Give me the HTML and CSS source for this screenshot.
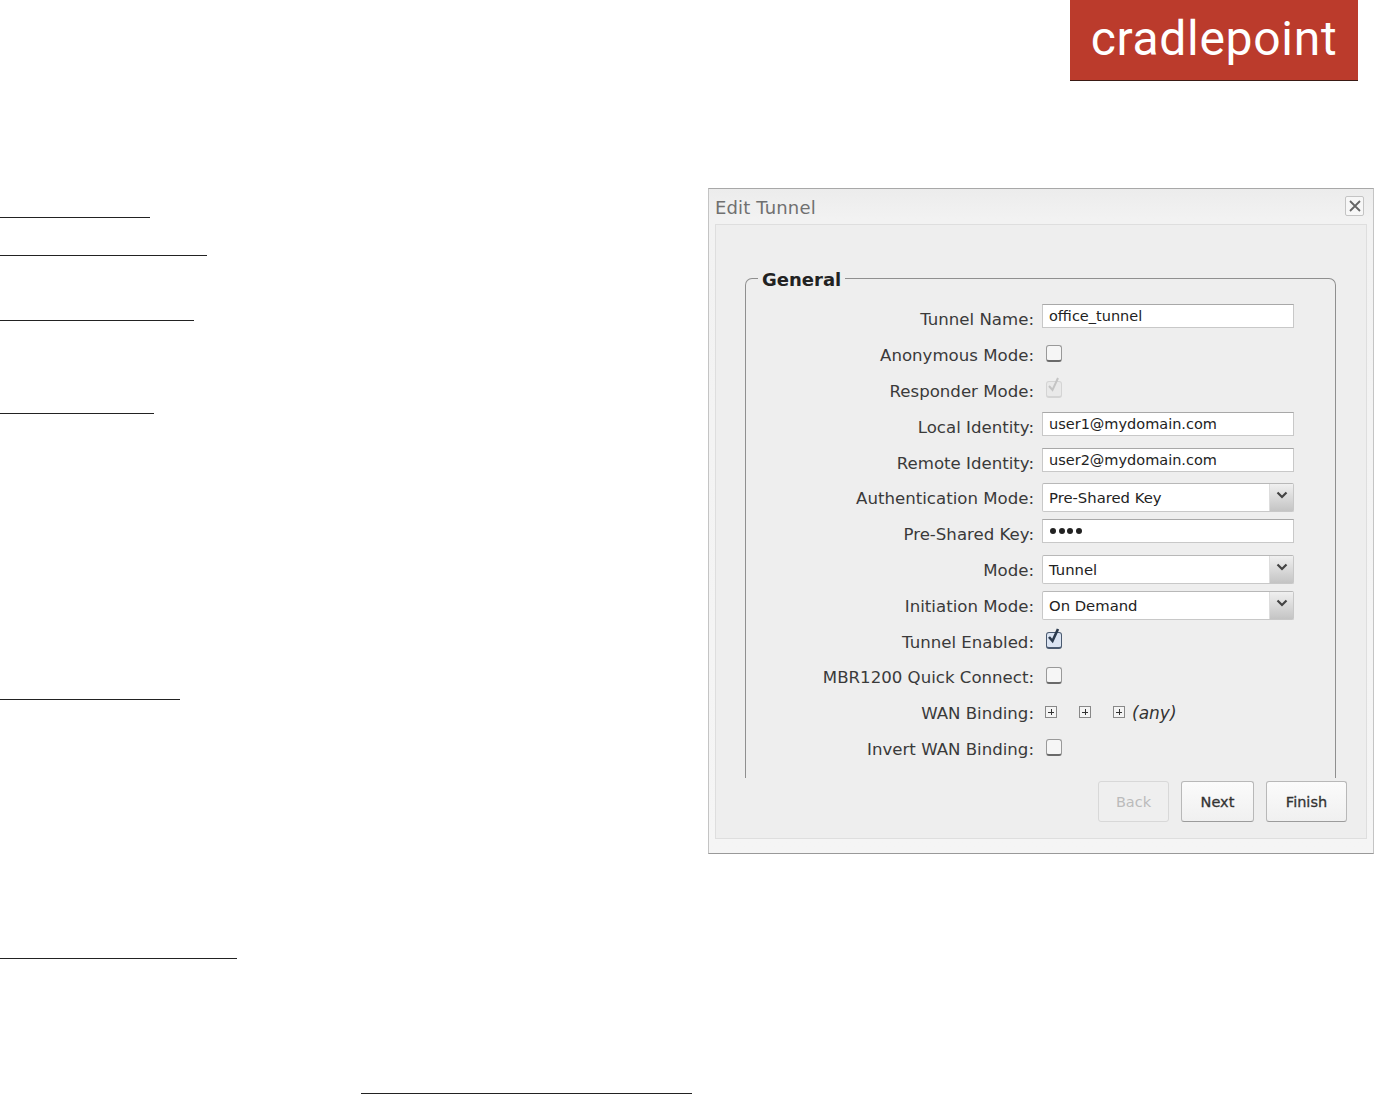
FILE: index.html
```html
<!DOCTYPE html>
<html lang="en">
<head>
<meta charset="utf-8">
<title>Edit Tunnel</title>
<link rel="stylesheet" href="styles.css">
</head>
<body>
<header class="header"><div class="logo">cradlepoint</div></header>
<main class="main">
  <div class="rules">
    <div class="rule r1"></div>
    <div class="rule r2"></div>
    <div class="rule r3"></div>
    <div class="rule r4"></div>
    <div class="rule r5"></div>
    <div class="rule r6"></div>
    <div class="rule r7"></div>
  </div>
  <section class="dialog">
    <div class="title-bar">
      <span class="title">Edit Tunnel</span>
      <span class="close"><svg width="14" height="14" viewBox="0 0 14 14"><path d="M2 2 12 12M12 2 2 12" stroke="#666" stroke-width="1.800" fill="none"/></svg></span>
    </div>
    <div class="panel">
      <fieldset class="group">
        <legend class="legend">General</legend>
        <div class="row"><label class="label">Tunnel Name:</label><input class="text" value="office_tunnel"></div>
        <div class="row"><label class="label">Anonymous Mode:</label><span class="check"></span></div>
        <div class="row"><label class="label">Responder Mode:</label><span class="check disabled"><svg class="tick" width="18" height="20" viewBox="0 0 18 20"><path d="M4 11 7.500 15 13 3" stroke="#c4c4c4" stroke-width="2" fill="none"/></svg></span></div>
        <div class="row"><label class="label">Local Identity:</label><input class="text" value="user1@mydomain.com"></div>
        <div class="row"><label class="label">Remote Identity:</label><input class="text" value="user2@mydomain.com"></div>
        <div class="row"><label class="label">Authentication Mode:</label><div class="select"><span class="select-value">Pre-Shared Key</span><span class="select-arrow"><svg width="12" height="8" viewBox="0 0 12 8"><path d="M1.500 1.500 6 6 10.500 1.500" stroke="#444" stroke-width="2.200" fill="none"/></svg></span></div></div>
        <div class="row"><label class="label">Pre-Shared Key:</label><div class="text dots"><span class="dot"></span><span class="dot"></span><span class="dot"></span><span class="dot"></span></div></div>
        <div class="row"><label class="label">Mode:</label><div class="select"><span class="select-value">Tunnel</span><span class="select-arrow"><svg width="12" height="8" viewBox="0 0 12 8"><path d="M1.500 1.500 6 6 10.500 1.500" stroke="#444" stroke-width="2.200" fill="none"/></svg></span></div></div>
        <div class="row"><label class="label">Initiation Mode:</label><div class="select"><span class="select-value">On Demand</span><span class="select-arrow"><svg width="12" height="8" viewBox="0 0 12 8"><path d="M1.500 1.500 6 6 10.500 1.500" stroke="#444" stroke-width="2.200" fill="none"/></svg></span></div></div>
        <div class="row"><label class="label">Tunnel Enabled:</label><span class="check checked"><svg class="tick" width="18" height="20" viewBox="0 0 18 20"><path d="M4 11 7.500 15 13 3" stroke="#2b3a4d" stroke-width="2.600" fill="none"/></svg></span></div>
        <div class="row"><label class="label">MBR1200 Quick Connect:</label><span class="check"></span></div>
        <div class="row"><label class="label">WAN Binding:</label><div class="binding"><span class="plus"></span><span class="plus"></span><span class="plus"></span><em class="any">(any)</em></div></div>
        <div class="row"><label class="label">Invert WAN Binding:</label><span class="check"></span></div>
      </fieldset>
      <div class="actions">
        <button class="btn back" disabled>Back</button>
        <button class="btn next">Next</button>
        <button class="btn finish">Finish</button>
      </div>
    </div>
  </section>
</main>
</body>
</html>
```
FILE: styles.css
```css
* { box-sizing: border-box; }
html, body { margin: 0; padding: 0; background: #fff; overflow: hidden; }
body { height: 1094px; font-family: "DejaVu Sans", sans-serif; color: #333; }

.header { display: flex; justify-content: flex-end; padding-right: 16px; height: 81px; }
.logo {
  width: 288px; height: 81px; background: #bb3b2c; border-bottom: 1px solid #3a1a14;
  color: #fff; font-family: Roboto, sans-serif; font-weight: 400; font-size: 48px; line-height: 78px;
  letter-spacing: 0.7px; text-align: center;
}

.main { display: flex; align-items: flex-start; }
.rules { width: 708px; flex: none; }
.rule { height: 1px; background: #222; }
.r1 { width: 150px; margin-top: 136px; }
.r2 { width: 207px; margin-top: 37px; }
.r3 { width: 194px; margin-top: 64px; }
.r4 { width: 154px; margin-top: 92px; }
.r5 { width: 180px; margin-top: 285px; }
.r6 { width: 237px; margin-top: 258px; }
.r7 { width: 331px; margin-top: 134px; margin-left: 361px; }

.dialog {
  width: 666px; height: 666px; margin-top: 107px; flex: none;
  background: linear-gradient(#ececec, #f2f2f2 30px, #f5f5f5);
  border: 1px solid #c4c4c4; border-top-color: #a8a8a8; border-bottom-color: #999;
  padding: 0 6px 14px;
  display: flex; flex-direction: column;
}
.title-bar { height: 35px; display: flex; align-items: center; justify-content: space-between; }
.title { font-size: 18px; letter-spacing: 0.15px; color: #707070; padding-top: 2px; }
.close {
  width: 19px; height: 20px; border: 1px solid #c4c4c4; border-radius: 2px; background: #f7f7f7;
  display: flex; align-items: center; justify-content: center; margin: -2px 3px 0 0;
}
.panel {
  flex: 1; border: 1px solid #dedede; background: #eeeeee;
  padding: 41px 19px 0 29px;
  display: flex; flex-direction: column;
}
.group {
  margin: 0 11px 0 0; padding: 0; height: 512px; min-width: 0;
  border: 1px solid #8f8f8f; border-bottom: 0; border-radius: 7px 7px 0 0;
}
.legend { margin-left: 12px; padding: 4px 4px 0; font-size: 18px; font-weight: 700; color: #222; line-height: 20px; }

.row { display: grid; grid-template-columns: 288px 252px; column-gap: 8px; height: 35.800px; align-items: center; }
.row:first-of-type { margin-top: 11px; }
.label { text-align: right; font-size: 16.600px; color: #3a3a3a; white-space: nowrap; padding-top: 2px; }

.text {
  width: 252px; height: 24px; padding: 0 6px; margin-top: -5px;
  border: 1px solid #c8c8c8; border-top-color: #a8a8a8;
  background: #fff; font: 14.500px "DejaVu Sans", sans-serif; color: #222; outline: none;
}
.dots { display: flex; align-items: center; gap: 2.500px; padding-left: 7px; }
.dot { width: 6px; height: 6px; border-radius: 50%; background: #222; }

.select {
  width: 252px; height: 29px; display: flex; background: #fff;
  border: 1px solid #c8c8c8; border-top-color: #b8b8b8; border-radius: 2px;
  font-size: 14.800px; color: #222;
}
.select-value { flex: 1; padding: 0 6px; line-height: 27px; }
.select-arrow {
  width: 24px; display: flex; align-items: flex-start; justify-content: center; padding-top: 7px;
  background: linear-gradient(#f0f0f0, #c4c4c4); border-left: 1px solid #ddd;
}

.check {
  position: relative; display: block; width: 16px; height: 17px; margin: -2px 0 0 4px;
  background: #f6f6f6; border: 1px solid #999; border-bottom: 2px solid #6a6a6a; border-radius: 3px;
}
.check.disabled { background: #e9e9e9; border-color: #d4d4d4; }
.check.checked { background: #dbe4f2; border-color: #4a5a70; }
.tick { position: absolute; left: -2px; top: -7px; }

.binding { display: flex; align-items: center; padding-left: 3px; }
.plus {
  width: 12px; height: 12px; margin-right: 22px; margin-top: -1px;
  border: 1px solid #888; background-color: #f4f4f4;
  background-image: linear-gradient(#333, #333), linear-gradient(#333, #333);
  background-size: 6px 1px, 1px 6px; background-position: center; background-repeat: no-repeat;
}
.plus:nth-child(3) { margin-right: 7px; }
.any { font-size: 17px; color: #333; margin-top: 1px; }

.actions { display: flex; justify-content: flex-end; gap: 12px; margin-top: 3px; }
.btn {
  height: 41px; font: 400 14.500px "DejaVu Sans", sans-serif; color: #333; -webkit-text-stroke: 0.3px #333;
  background: linear-gradient(#fbfbfb, #f0f0f0);
  border: 1px solid #b8b8b8; border-bottom-color: #9c9c9c; border-radius: 3px; padding: 0;
}
.back { width: 71px; color: #bbb; -webkit-text-stroke: 0; border-color: #d8d8d8; background: #efefef; }
.next { width: 73px; }
.finish { width: 81px; }
```
